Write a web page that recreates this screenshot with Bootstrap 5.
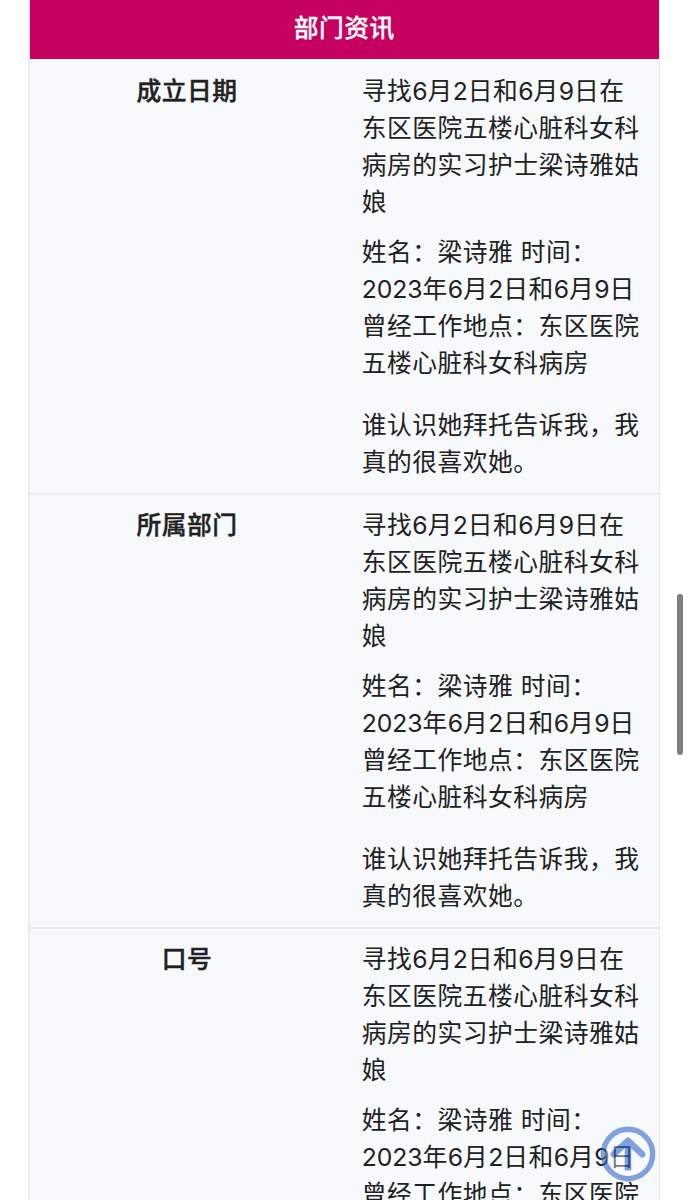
<!DOCTYPE html>
<html lang="zh-CN">
<head>
<meta charset="utf-8">
<meta name="viewport" content="width=device-width, initial-scale=1">
<title>部门资讯</title>
<link href="https://cdn.jsdelivr.net/npm/bootstrap@5.3.0/dist/css/bootstrap.min.css" rel="stylesheet">
<style>
html{font-size:24.75px;height:100%;overflow:hidden}
body{height:100%;overflow:hidden;background:#fff;color:#202122;font-family:Inter,"Noto Sans CJK SC",sans-serif;font-size:24.75px;line-height:37.1px;letter-spacing:.5px}
.info-box{width:631.5px;height:1200px;overflow:hidden;margin-left:28px;border:solid #eaecf0;border-width:0 1.5px 0 2px;background:#f8f9fb}
.info-head{background:#c60060;color:#fff;height:59px;padding-top:10px;font-weight:500;-webkit-text-stroke:.3px #fff}
.info-row{height:434px;border-bottom:2px solid #eaecf0;padding-top:14px}
.info-row:first-of-type{height:436px}
.info-row+.info-row{padding-top:12px}
.info-label{width:314px;font-weight:500;-webkit-text-stroke:.4px #202122}
.info-text{padding-left:17.8px;font-weight:400}
.info-text p{margin:0 0 12.6px;white-space:nowrap}
.info-text p.gap-above{margin-top:24.8px}
.num{letter-spacing:-.1px}
.to-top{right:32px;bottom:18px;width:56px;height:56px}
.scroll-thumb{right:5px;top:594px;width:6px;height:161px;background:#7e7e7e}
</style>
</head>
<body>
<main class="info-box">
  <div class="info-head text-center">部门资讯</div>
  <section class="info-row d-flex">
    <div class="info-label flex-shrink-0 text-center">成立日期</div>
    <div class="info-text">
      <p>寻找<span class="num">6</span>月<span class="num">2</span>日和<span class="num">6</span>月<span class="num">9</span>日在<br>东区医院五楼心脏科女科<br>病房的实习护士梁诗雅姑<br>娘</p>
      <p>姓名：梁诗雅 时间：<br><span class="num">2023</span>年<span class="num">6</span>月<span class="num">2</span>日和<span class="num">6</span>月<span class="num">9</span>日<br>曾经工作地点：东区医院<br>五楼心脏科女科病房</p>
      <p class="gap-above">谁认识她拜托告诉我，我<br>真的很喜欢她。</p>
    </div>
  </section>
  <section class="info-row d-flex">
    <div class="info-label flex-shrink-0 text-center">所属部门</div>
    <div class="info-text">
      <p>寻找<span class="num">6</span>月<span class="num">2</span>日和<span class="num">6</span>月<span class="num">9</span>日在<br>东区医院五楼心脏科女科<br>病房的实习护士梁诗雅姑<br>娘</p>
      <p>姓名：梁诗雅 时间：<br><span class="num">2023</span>年<span class="num">6</span>月<span class="num">2</span>日和<span class="num">6</span>月<span class="num">9</span>日<br>曾经工作地点：东区医院<br>五楼心脏科女科病房</p>
      <p class="gap-above">谁认识她拜托告诉我，我<br>真的很喜欢她。</p>
    </div>
  </section>
  <section class="info-row d-flex">
    <div class="info-label flex-shrink-0 text-center">口号</div>
    <div class="info-text">
      <p>寻找<span class="num">6</span>月<span class="num">2</span>日和<span class="num">6</span>月<span class="num">9</span>日在<br>东区医院五楼心脏科女科<br>病房的实习护士梁诗雅姑<br>娘</p>
      <p>姓名：梁诗雅 时间：<br><span class="num">2023</span>年<span class="num">6</span>月<span class="num">2</span>日和<span class="num">6</span>月<span class="num">9</span>日<br>曾经工作地点：东区医院</p>
    </div>
  </section>
</main>
<a href="#" class="to-top position-fixed d-block" aria-label="返回顶部">
  <svg class="d-block" width="56" height="56" viewBox="0 0 56 56" fill="none" stroke="#36c" opacity=".6">
    <circle cx="28" cy="28" r="24.7" fill="#f8f9fb" fill-opacity=".7" stroke-width="5.4"/>
    <path d="M13.8 28.2 28 14.8 42.2 28.2" stroke-width="6.6" stroke-linejoin="round" stroke-linecap="round"/>
    <path d="M28 15V44.5" stroke-width="6.6"/>
  </svg>
</a>
<div class="scroll-thumb position-fixed rounded-pill"></div>
<script src="https://cdn.jsdelivr.net/npm/bootstrap@5.3.0/dist/js/bootstrap.bundle.min.js"></script>
</body>
</html>
